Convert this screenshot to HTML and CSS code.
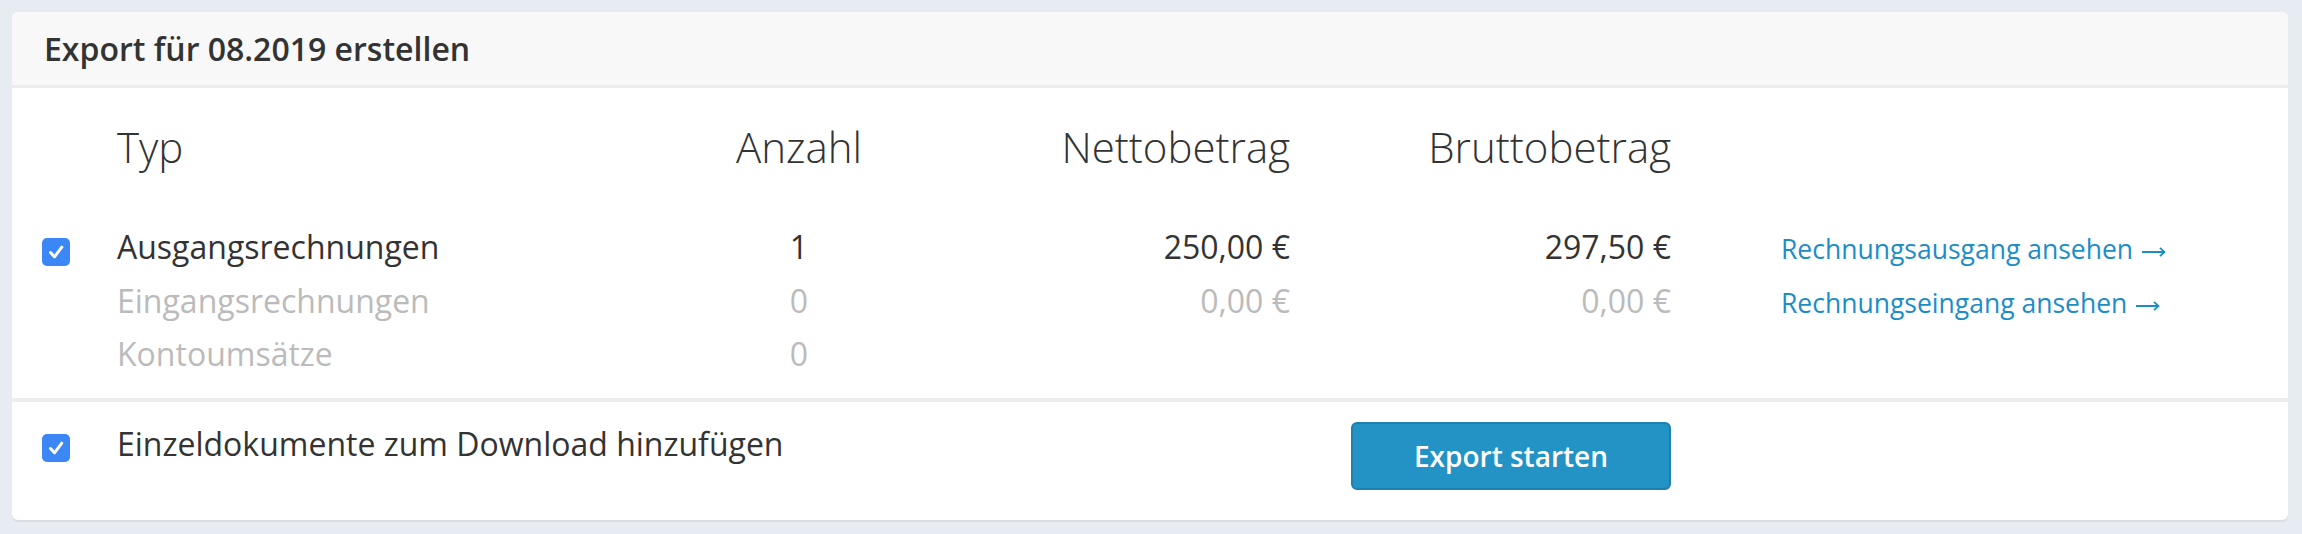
FILE: index.html
```html
<!DOCTYPE html>
<html lang="de">
<head>
<meta charset="utf-8">
<title>Export</title>
<link rel="stylesheet" href="styles.css">
</head>
<body>
<div class="card">
  <div class="card-header">Export für 08.2019 erstellen</div>
  <div class="table">
    <div class="th"></div>
    <div class="th typ">Typ</div>
    <div class="th center">Anzahl</div>
    <div class="th right">Nettobetrag</div>
    <div class="th right">Bruttobetrag</div>
    <div class="th"></div>

    <div class="cell first"><span class="check"><svg viewBox="0 0 28 28" width="28" height="28"><path d="M8.5 14.5 L12.5 18.8 L19.8 9.2" fill="none" stroke="#fff" stroke-width="3" stroke-linecap="round" stroke-linejoin="round"/></svg></span></div>
    <div class="cell first">Ausgangsrechnungen</div>
    <div class="cell first center">1</div>
    <div class="cell first right">250,00 €</div>
    <div class="cell first right">297,50 €</div>
    <div class="cell first link-cell"><a class="link" href="#">Rechnungsausgang ansehen<svg class="arrow" viewBox="0 0 24 12" width="24" height="12"><path d="M0 6 H22.5 M18 1.8 L22.5 6 L18 10.2" fill="none" stroke="currentColor" stroke-width="1.8" stroke-linejoin="miter"/></svg></a></div>

    <div class="cell"></div>
    <div class="cell muted">Eingangsrechnungen</div>
    <div class="cell muted center">0</div>
    <div class="cell muted right">0,00 €</div>
    <div class="cell muted right">0,00 €</div>
    <div class="cell link-cell"><a class="link" href="#">Rechnungseingang ansehen<svg class="arrow" viewBox="0 0 24 12" width="24" height="12"><path d="M0 6 H22.5 M18 1.8 L22.5 6 L18 10.2" fill="none" stroke="currentColor" stroke-width="1.8" stroke-linejoin="miter"/></svg></a></div>

    <div class="cell"></div>
    <div class="cell muted">Kontoumsätze</div>
    <div class="cell muted center">0</div>
    <div class="cell"></div>
    <div class="cell"></div>
    <div class="cell"></div>
  </div>
  <div class="footer">
    <div class="foot-check"><span class="check"><svg viewBox="0 0 28 28" width="28" height="28"><path d="M8.5 14.5 L12.5 18.8 L19.8 9.2" fill="none" stroke="#fff" stroke-width="3" stroke-linecap="round" stroke-linejoin="round"/></svg></span></div>
    <div class="foot-label">Einzeldokumente zum Download hinzufügen</div>
    <div class="foot-btn"><button class="btn">Export starten</button></div>
  </div>
</div>
</body>
</html>
```

FILE: styles.css
```css
html, body {
  margin: 0;
  padding: 0;
}
body {
  background: #e7ebf2;
  font-family: "Open Sans", "Liberation Sans", sans-serif;
  color: #333;
  padding: 12px 14px 12px 12px;
}
.card {
  background: #fff;
  border-radius: 6px;
  box-shadow: 0 2px 0 #dadde3;
  overflow: hidden;
  height: 508px;
}
.card-header {
  background: #f8f8f8;
  border-bottom: 3px solid #ececec;
  height: 73px;
  display: flex;
  align-items: center;
  padding-left: 32px;
  font-size: 32px;
  font-weight: 600;
  color: #333;
}
.table {
  display: grid;
  grid-template-columns: 75px 583px 198px 392px 381px 1fr;
  padding: 32px 0 17px 30px;
  border-bottom: 4px solid #ededed;
}
.th {
  font-size: 42px;
  font-weight: 300;
  line-height: 54px;
  color: #333;
  margin-bottom: 46px;
}
.cell {
  font-size: 32px;
  line-height: 53.5px;
  height: 53.5px;
  color: #333;
}
.center { text-align: center; }
.right { text-align: right; }
.muted { color: #bbb; }
.check {
  display: block;
  width: 28px;
  height: 28px;
  border-radius: 5px;
  background: #3b87f5;
  margin-top: 18px;
}
.check svg { display: block; }
.link-cell {
  padding-left: 110px;
}
.link {
  color: #1d8dc8;
  text-decoration: none;
  font-size: 26.5px;
  line-height: 1;
}
.arrow {
  display: inline-block;
  margin-left: 9px;
  vertical-align: 1px;
}
.footer {
  display: grid;
  grid-template-columns: 75px 583px 198px 392px 381px 1fr;
  padding: 15px 0 0 30px;
}
.foot-check .check { margin-top: 17px; }
.foot-label {
  grid-column: 2 / 4;
  font-size: 32px;
  line-height: 53.5px;
}
.foot-btn {
  grid-column: 5;
  display: flex;
  justify-content: flex-end;
  padding-top: 5px;
}
.btn {
  width: 320px;
  height: 68px;
  background: #2392c5;
  border: 2px solid #1f7fae;
  border-radius: 6px;
  color: #fff;
  font-family: "Open Sans", "Liberation Sans", sans-serif;
  font-size: 28px;
  font-weight: 600;
  cursor: pointer;
}
```
